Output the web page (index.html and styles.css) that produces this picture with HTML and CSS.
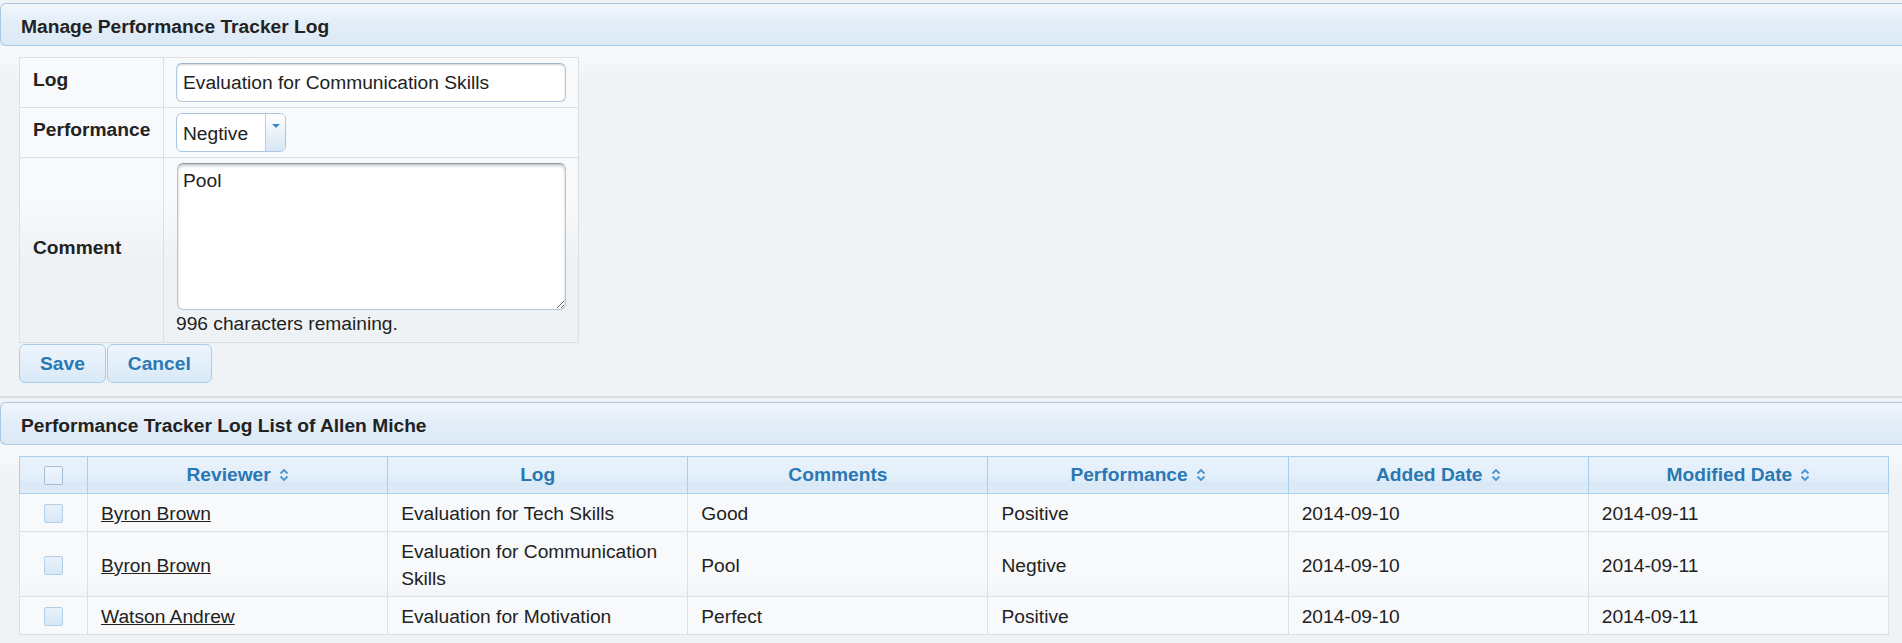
FILE: index.html
```html
<!DOCTYPE html>
<html lang="en">
<head>
<meta charset="utf-8">
<title>Manage Performance Tracker Log</title>
<link rel="stylesheet" href="styles.css">
</head>
<body>
<section class="box">
  <div class="box-head"><h1>Manage Performance Tracker Log</h1></div>
  <div class="box-inner form-inner">
    <table class="form-table">
      <colgroup><col class="c-label"><col></colgroup>
      <tr>
        <th>Log</th>
        <td><input class="text" type="text" value="Evaluation for Communication Skills"></td>
      </tr>
      <tr>
        <th>Performance</th>
        <td>
          <div class="combo">
            <select class="combo-select"><option>Negtive</option><option>Positive</option></select>
            <span class="combo-btn"><span class="tri"></span></span>
          </div>
        </td>
      </tr>
      <tr>
        <th>Comment</th>
        <td>
          <textarea class="area">Pool</textarea>
          <div class="remaining">996 characters remaining.</div>
        </td>
      </tr>
    </table>
    <div class="actions">
      <button class="btn" type="button">Save</button>
      <button class="btn" type="button">Cancel</button>
    </div>
  </div>
</section>

<section class="box box-list">
  <div class="box-head"><h1>Performance Tracker Log List of Allen Miche</h1></div>
  <div class="box-inner list-inner">
    <table class="grid">
      <colgroup><col class="c-check"><col><col><col><col><col><col></colgroup>
      <thead>
        <tr>
          <th class="chk"><input class="cb cb-head" type="checkbox"></th>
          <th>Reviewer<svg class="sort" viewBox="0 0 10 14" width="10" height="14"><path d="M1.5 5.5 L5 2 L8.5 5.5 M1.5 8.5 L5 12 L8.5 8.5"/></svg></th>
          <th>Log</th>
          <th>Comments</th>
          <th>Performance<svg class="sort" viewBox="0 0 10 14" width="10" height="14"><path d="M1.5 5.5 L5 2 L8.5 5.5 M1.5 8.5 L5 12 L8.5 8.5"/></svg></th>
          <th>Added Date<svg class="sort" viewBox="0 0 10 14" width="10" height="14"><path d="M1.5 5.5 L5 2 L8.5 5.5 M1.5 8.5 L5 12 L8.5 8.5"/></svg></th>
          <th>Modified Date<svg class="sort" viewBox="0 0 10 14" width="10" height="14"><path d="M1.5 5.5 L5 2 L8.5 5.5 M1.5 8.5 L5 12 L8.5 8.5"/></svg></th>
        </tr>
      </thead>
      <tbody>
        <tr>
          <td class="chk"><input class="cb" type="checkbox"></td>
          <td><a href="#">Byron Brown</a></td>
          <td>Evaluation for Tech Skills</td>
          <td>Good</td>
          <td>Positive</td>
          <td>2014-09-10</td>
          <td>2014-09-11</td>
        </tr>
        <tr>
          <td class="chk"><input class="cb" type="checkbox"></td>
          <td><a href="#">Byron Brown</a></td>
          <td>Evaluation for Communication Skills</td>
          <td>Pool</td>
          <td>Negtive</td>
          <td>2014-09-10</td>
          <td>2014-09-11</td>
        </tr>
        <tr>
          <td class="chk"><input class="cb" type="checkbox"></td>
          <td><a href="#">Watson Andrew</a></td>
          <td>Evaluation for Motivation</td>
          <td>Perfect</td>
          <td>Positive</td>
          <td>2014-09-10</td>
          <td>2014-09-11</td>
        </tr>
      </tbody>
    </table>
  </div>
</section>
</body>
</html>
```

FILE: styles.css
```css
html, body {
  margin: 0;
  padding: 0;
}

body {
  padding-top: 3px;
  background: #eff3f6;
  font-family: "Liberation Sans", Arial, sans-serif;
  font-size: 19.2px;
  line-height: 27px;
  color: #222;
  overflow: hidden;
}

.box-head {
  border: 1px solid #a9c8e4;
  border-top-color: #adc6dd;
  border-bottom-color: #a7cbec;
  border-right: 0;
  border-radius: 6px 0 0 6px;
  background: linear-gradient(#f1f7fc 0%, #e2edf8 50%, #dceaf6 100%);
  padding: 5px 20px 0;
}

.box-head h1 {
  margin: 0;
  font-size: 19.2px;
  line-height: 36px;
  font-weight: bold;
  color: #222;
}

.box-inner {
  background: linear-gradient(#f8f9fb 0, #f6f8fa 12px, #eff3f6 36px);
}

.form-inner {
  padding: 11px 0 13px 19px;
  border-bottom: 2px solid #d9dcdf;
}

.box-list {
  margin-top: 4px;
}

.list-inner {
  padding: 11px 13px 8px 19px;
}

/* form table */
.form-table {
  border-collapse: collapse;
  table-layout: fixed;
  width: 560px;
}

.form-table .c-label {
  width: 144px;
}

.form-table th,
.form-table td {
  border: 1px solid #dcdfe3;
  background: linear-gradient(#f8f9fb 0, #f7f9fa 45px, #eff2f5 100px);
}

.form-table th {
  text-align: left;
  font-weight: bold;
  padding: 0 13px 6px;
  vertical-align: middle;
}

.form-table td {
  padding: 5px 12px;
  vertical-align: top;
}

.text {
  display: block;
  box-sizing: border-box;
  width: 390px;
  height: 39px;
  margin: 0;
  padding: 0 6px;
  border: 1px solid #adc8e0;
  border-top-color: #9fb4c7;
  border-radius: 6px;
  background: #fff;
  box-shadow: inset 0 1px 2px rgba(0, 0, 0, 0.18);
  font: inherit;
  color: #222;
}

.combo {
  display: flex;
  box-sizing: border-box;
  width: 110px;
  height: 39px;
  border: 1px solid #a9c7e2;
  border-radius: 6px;
  background: #fff;
  overflow: hidden;
}

.combo-select {
  flex: 1;
  min-width: 0;
  appearance: none;
  -webkit-appearance: none;
  border: 0;
  margin: 0;
  padding: 2px 6px 0;
  background: transparent;
  font: inherit;
  color: #222;
  outline: none;
}

.combo-btn {
  display: flex;
  justify-content: center;
  width: 19px;
  border-left: 1px solid #b4cde3;
  background: linear-gradient(#ffffff 0%, #eef5fb 40%, #d7e7f5 100%);
}

.tri {
  margin-top: 10px;
  width: 0;
  height: 0;
  border-left: 4px solid transparent;
  border-right: 4px solid transparent;
  border-top: 4px solid #3d87cb;
}

.area {
  display: block;
  box-sizing: border-box;
  width: 389px;
  height: 147px;
  margin: 0 0 0 1px;
  padding: 5px 5px;
  border: 1px solid #adc8e0;
  border-top-color: #8f9aa4;
  border-radius: 6px;
  background: #fff;
  box-shadow: inset 0 2px 3px rgba(0, 0, 0, 0.22);
  font: inherit;
  line-height: 24px;
  color: #222;
}

.remaining {
  line-height: 27px;
  margin-top: 0;
}

.actions {
  display: flex;
  gap: 1px;
  margin-top: 1px;
}

.btn {
  box-sizing: border-box;
  height: 39px;
  margin: 0;
  padding: 0 20px;
  border: 1px solid #aacde9;
  border-radius: 6px;
  background: linear-gradient(#edf5fc 0%, #e3effa 50%, #d9e9f7 100%);
  font-family: inherit;
  font-size: 19.2px;
  font-weight: bold;
  color: #2a78b3;
  cursor: pointer;
}

/* data grid */
.grid {
  width: 100%;
  border-collapse: collapse;
  table-layout: fixed;
}

.grid .c-check {
  width: 68px;
}

.grid th {
  padding: 4px 13px 4px;
  line-height: 28px;
  border: 1px solid #a9cfee;
  background: linear-gradient(#e8f2fb 0%, #e2eefa 55%, #d9e8f6 75%, #dfedf9 100%);
  color: #2a78b3;
  font-weight: bold;
  text-align: center;
}

.grid td {
  padding: 6px 13px 4px;
  line-height: 27px;
  border: 1px solid #dcdfe3;
  background: linear-gradient(#f8f9fb 0, #f8f9fb 45px, #f0f3f6 70px);
  vertical-align: middle;
  text-align: left;
}

.grid .chk {
  padding: 0;
  text-align: center;
}

.grid a {
  color: #222;
  text-decoration: underline;
}

.cb {
  appearance: none;
  -webkit-appearance: none;
  display: inline-block;
  box-sizing: border-box;
  width: 19px;
  height: 19px;
  margin: 0;
  vertical-align: middle;
  border: 1px solid #b3cfe8;
  border-radius: 2px;
  background: linear-gradient(#e9f2fb, #d7e7f5);
}

.cb-head {
  border-color: #a4bfd6;
  background: linear-gradient(#eef5fc, #e1edf8);
}

.sort {
  display: inline-block;
  margin-left: 8px;
  vertical-align: -1px;
  fill: none;
  stroke: #4d93cf;
  stroke-width: 1.8;
}
```
